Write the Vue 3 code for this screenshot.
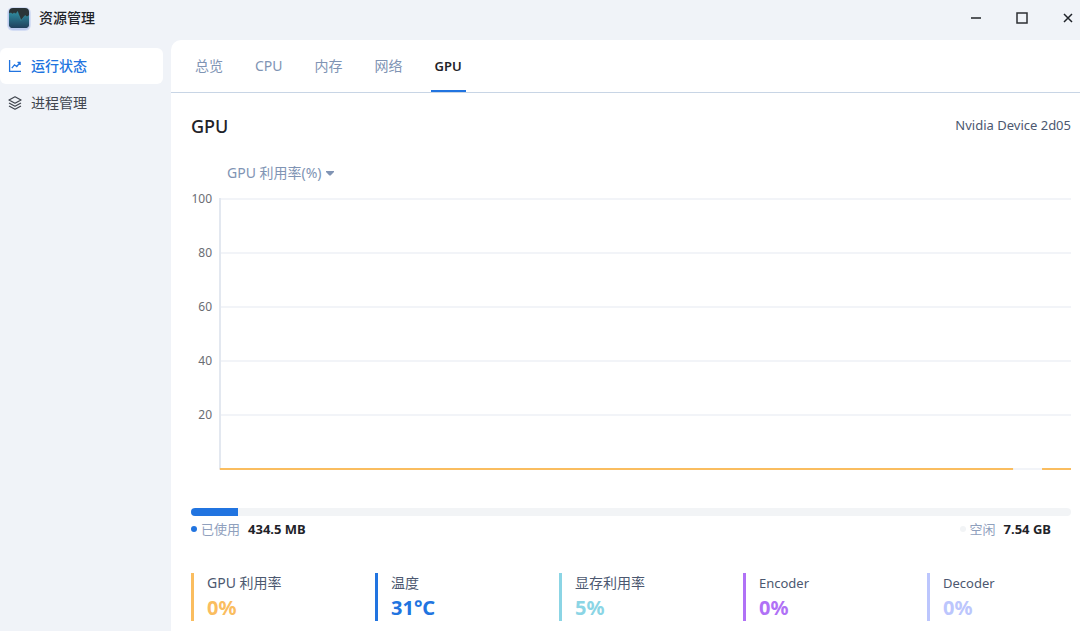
<script setup>
import { ref } from 'vue'

const sections = [
  { id: 'status', label: '运行状态' },
  { id: 'process', label: '进程管理' },
]
const section = ref('status')

const tabs = ['总览', 'CPU', '内存', '网络', 'GPU']
const tab = ref('GPU')

const metric = ref('util')
const ticks = [100, 80, 60, 40, 20, 0]
const segments = [
  { from: '0.1%', to: '93.2%' },
  { from: '96.6%', to: '100%' },
]

const usedPercent = 5.34

const stats = [
  { label: 'GPU 利用率', value: '0%', tone: 'orange' },
  { label: '温度', value: '31°C', tone: 'blue' },
  { label: '显存利用率', value: '5%', tone: 'cyan' },
  { label: 'Encoder', value: '0%', tone: 'purple', latin: true },
  { label: 'Decoder', value: '0%', tone: 'lavender', latin: true },
]
</script>

<template>
  <div class="window">
    <header class="titlebar">
      <svg class="logo" viewBox="0 0 24 24" aria-hidden="true">
        <defs>
          <linearGradient id="wave" x1="0" y1="0" x2="0" y2="1">
            <stop offset="0" stop-color="#2f8fa2" />
            <stop offset="1" stop-color="#203f5c" />
          </linearGradient>
        </defs>
        <rect x="0" y="0" width="24" height="24" rx="6" fill="#c3d0f2" opacity="0.6" />
        <rect x="1" y="1" width="22" height="22" rx="5" fill="#b7c5ec" opacity="0.8" />
        <rect x="2" y="1" width="20" height="20" rx="4" fill="#2a3437" />
        <path d="M2 6.500l2-.500 1.500 1 1.500-1 2 1 1.500-2.500 3.500 9 4-5 2 1.500 2-1.500V17a4 4 0 0 1-4 4H6a4 4 0 0 1-4-4z" fill="url(#wave)" />
        <path d="M2 6.500l2-.500 1.500 1 1.500-1 2 1 1.500-2.500 3.500 9 4-5 2 1.500 2-1.500" fill="none" stroke="#388d9e" stroke-width="0.6" />
      </svg>
      <h1>资源管理</h1>
      <div class="controls">
        <button type="button" aria-label="最小化">
          <svg viewBox="0 0 12 12"><path d="M1 6h10" stroke="#55585c" stroke-width="2" /></svg>
        </button>
        <button type="button" aria-label="最大化">
          <svg viewBox="0 0 12 12"><rect x="1" y="1" width="10" height="10" fill="none" stroke="#2c2f33" stroke-width="1.5" /></svg>
        </button>
        <button type="button" aria-label="关闭">
          <svg viewBox="0 0 12 12"><path d="M2 2l8 8M10 2l-8 8" stroke="#1f2329" stroke-width="1.5" /></svg>
        </button>
      </div>
    </header>

    <div class="body">
      <nav class="sidebar">
        <button
          v-for="s in sections"
          :key="s.id"
          type="button"
          :class="{ active: section === s.id }"
          @click="section = s.id"
        >
          <svg v-if="s.id === 'status'" viewBox="0 0 14 14" fill="none" stroke="currentColor" stroke-width="1.3" aria-hidden="true">
            <path d="M1.600 1v11.400h11.400M3.800 9.200l2.700-3.400 2.300 1.700L12 3.500M9.500 3.400h2.600v2.600" />
          </svg>
          <svg v-else viewBox="0 0 14 14" fill="none" stroke="currentColor" stroke-width="1.3" stroke-linejoin="round" aria-hidden="true">
            <path d="M7 .8l6 3.200L7 7.200 1 4zM1 7l6 3.200L13 7M1 10l6 3.200 6-3.200" />
          </svg>
          <span>{{ s.label }}</span>
        </button>
      </nav>

      <main class="panel">
        <div class="tabs" role="tablist">
          <button
            v-for="t in tabs"
            :key="t"
            type="button"
            role="tab"
            :aria-selected="tab === t"
            :class="{ active: tab === t }"
            @click="tab = t"
          >{{ t }}</button>
        </div>

        <div class="content">
          <div class="heading">
            <h2>GPU</h2>
            <span>Nvidia Device 2d05</span>
          </div>

          <div class="metric">
            <select v-model="metric" aria-label="图表指标">
              <option value="util">GPU 利用率(%)</option>
            </select>
            <svg viewBox="0 0 8 5" aria-hidden="true"><path d="M0 0h8v1L4.600 4.600H3.400L0 1z" fill="#8094b4" /></svg>
          </div>

          <div class="chart">
            <div class="ticks">
              <span v-for="n in ticks" :key="n">{{ n || '' }}</span>
            </div>
            <svg class="plot" role="img" aria-label="GPU 利用率">
              <line v-for="(n, i) in ticks" :key="n" class="grid" x1="0" x2="100%" :y1="1 + i * 54" :y2="1 + i * 54" />
              <line class="axis" x1="1" x2="1" y1="0" y2="271" />
              <line v-for="s in segments" :key="s.from" class="series" :x1="s.from" :x2="s.to" y1="271" y2="271" />
            </svg>
          </div>

          <div class="track"><div class="fill" :style="{ width: usedPercent + '%' }"></div></div>
          <div class="legend">
            <div class="entry used"><i></i><span>已使用</span><b>434.5 MB</b></div>
            <div class="entry free"><i></i><span>空闲</span><b>7.54 GB</b></div>
          </div>

          <dl class="stats">
            <div v-for="s in stats" :key="s.label" class="stat" :class="s.tone">
              <dt :class="{ latin: s.latin }">{{ s.label }}</dt>
              <dd>{{ s.value }}</dd>
            </div>
          </dl>
        </div>
      </main>
    </div>
  </div>
</template>

<style>
body {
  margin: 0;
  background: #f0f3f8;
}
</style>

<style scoped>
.window {
  display: flex;
  flex-direction: column;
  min-height: 100vh;
  overflow: hidden;
  background: #f0f3f8;
  color: #1f2329;
  font-family: "Noto Sans", "Noto Sans CJK SC", sans-serif;
  font-size: 14px;
  line-height: 20px;
}
h1, h2, dl, dd {
  margin: 0;
}
button, select {
  margin: 0;
  padding: 0;
  border: 0;
  background: none;
  color: inherit;
  font: inherit;
}
.titlebar {
  display: flex;
  align-items: center;
  height: 40px;
  padding-left: 7px;
  box-sizing: border-box;
}
.titlebar h1 {
  margin-left: 8px;
  padding-bottom: 4px;
  font-size: 14px;
  font-weight: 500;
}
.logo {
  width: 24px;
  height: 24px;
  margin-bottom: 2px;
}
.controls {
  display: flex;
  margin-left: auto;
  margin-right: -11px;
}
.controls button {
  display: flex;
  align-items: center;
  justify-content: center;
  width: 46px;
  height: 36px;
  margin-bottom: 4px;
}
.controls svg {
  width: 12px;
  height: 12px;
}
.body {
  display: flex;
  flex: 1;
}
.sidebar {
  display: flex;
  flex-direction: column;
  flex: 0 0 163px;
  gap: 1px;
  margin-right: 8px;
  padding-top: 8px;
}
.sidebar button {
  display: flex;
  align-items: center;
  gap: 9px;
  height: 36px;
  padding-left: 8px;
  border-radius: 6px;
  color: #41464f;
}
.sidebar button.active {
  background: #fff;
  color: #2174e0;
  font-weight: 500;
}
.sidebar svg {
  width: 14px;
  height: 14px;
}
.panel {
  flex: 1;
  min-width: 0;
  background: #fff;
  border-top-left-radius: 10px;
}
.tabs {
  display: flex;
  gap: 24px;
  height: 52px;
  padding-left: 20px;
  border-bottom: 1px solid #c8d5e5;
}
.tabs button {
  padding: 2px 4px 0;
  border-bottom: 2px solid transparent;
  color: #8094b4;
}
.tabs button.active {
  border-bottom-color: #2174e0;
  color: #1f2329;
  font-size: 13px;
  font-weight: 600;
}
.content {
  padding: 21px 9px 10px 20px;
}
.heading {
  display: flex;
  align-items: center;
  justify-content: space-between;
  height: 24px;
}
.heading h2 {
  font-size: 18px;
  font-weight: 500;
}
.heading span {
  padding-bottom: 2px;
  color: #4c5870;
  font-size: 13px;
}
.metric {
  position: relative;
  width: max-content;
  height: 20px;
  margin: 25px 0 0 36px;
}
.metric select {
  height: 20px;
  padding-right: 12px;
  appearance: none;
  color: #8094b4;
}
.metric svg {
  position: absolute;
  right: 0;
  top: 8px;
  width: 8px;
  height: 5px;
  pointer-events: none;
}
.chart {
  display: flex;
  margin-top: 15px;
}
.ticks {
  display: flex;
  flex-direction: column;
  gap: 34px;
  width: 21px;
  margin: -9px 7px -9px 0;
  color: #6a6d73;
  font-size: 12px;
  text-align: right;
}
.ticks span {
  height: 20px;
}
.plot {
  flex: 1;
  min-width: 0;
  height: 272px;
}
.plot line {
  stroke-width: 2;
}
.grid {
  stroke: #f2f4f8;
}
.plot .axis {
  stroke: #e3e8f0;
}
.series {
  stroke: #fabd5f;
}
.track {
  height: 8px;
  margin-top: 38px;
  overflow: hidden;
  border-radius: 4px;
  background: #f2f4f6;
}
.fill {
  height: 100%;
  background: #2174e0;
}
.legend {
  display: flex;
  justify-content: space-between;
  margin-top: 3px;
  padding-right: 20px;
  font-size: 13px;
}
.entry {
  display: flex;
  align-items: center;
}
.entry i {
  width: 6px;
  height: 6px;
  margin-right: 4px;
  border-radius: 50%;
}
.entry span {
  margin-right: 8px;
  color: #8fa0bd;
}
.used i {
  background: #2174e0;
}
.free i {
  background: #f2f4f6;
}
.stats {
  display: grid;
  grid-template-columns: repeat(5, 1fr);
  gap: 40px;
  margin-top: 34px;
}
.stat {
  height: 48px;
  padding-left: 13px;
  border-left: 3px solid;
}
.stat dt {
  height: 20px;
  color: #4c5870;
}
.stat .latin {
  font-size: 13px;
}
.stat dd {
  font-size: 20px;
  font-weight: 700;
  line-height: 30px;
}
.orange {
  color: #fabd5f;
}
.blue {
  color: #2174e0;
}
.cyan {
  color: #8bd5e5;
}
.purple {
  color: #b071f6;
}
.lavender {
  color: #bcc6fd;
}
</style>
